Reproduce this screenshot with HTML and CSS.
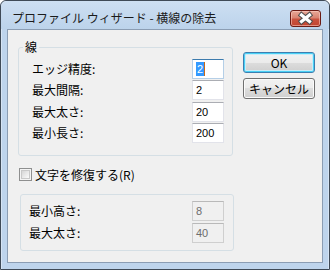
FILE: index.html
```html
<!DOCTYPE html>
<html lang="ja">
<head>
<meta charset="utf-8">
<link rel="stylesheet" href="styles.css">
</head>
<body>
<div class="window">
  <div class="titlebar">
    <span class="title">プロファイル ウィザード - 横線の除去</span>
    <span class="close">
      <svg width="31" height="17" viewBox="0 0 31 17">
        <path d="M11.5 5 L19.5 11.5 M19.5 5 L11.5 11.5" stroke="#4e4e4e" stroke-width="5.2" stroke-linecap="square" fill="none"/>
        <path d="M11.5 5 L19.5 11.5 M19.5 5 L11.5 11.5" stroke="#ffffff" stroke-width="3.2" stroke-linecap="square" fill="none"/>
      </svg>
    </span>
  </div>
  <div class="client">
    <div class="left">
      <div class="group g1">
        <span class="legend">線</span>
        <div class="row"><span class="lbl">エッジ精度:</span><span class="input focus"><span class="sel">2</span><span class="caret"></span></span></div>
        <div class="row"><span class="lbl">最大間隔:</span><span class="input">2</span></div>
        <div class="row"><span class="lbl">最大太さ:</span><span class="input">20</span></div>
        <div class="row"><span class="lbl">最小長さ:</span><span class="input">200</span></div>
      </div>
      <div class="check"><span class="box"><span class="inner"></span></span><span class="ctext">文字を修復する(R)</span></div>
      <div class="group g2">
        <div class="row"><span class="lbl">最小高さ:</span><span class="input disabled">8</span></div>
        <div class="row"><span class="lbl">最大太さ:</span><span class="input disabled">40</span></div>
      </div>
    </div>
    <div class="buttons">
      <span class="btn ok">OK</span>
      <span class="btn">キャンセル</span>
    </div>
  </div>
</div>
</body>
</html>
```
FILE: styles.css
```css
html, body {
  margin: 0;
  padding: 0;
  background: #ffffff;
}
body {
  font-family: "Noto Sans CJK JP", "Liberation Sans", sans-serif;
  font-size: 12px;
  color: #000;
}
.window {
  box-sizing: border-box;
  width: 330px;
  height: 270px;
  border: 1px solid #3f4a57;
  border-radius: 6px 6px 0 0;
  background: #bed4ec;
  padding: 0 6px 6px 6px;
  display: flex;
  flex-direction: column;
  box-shadow: inset 0 1px 0 #e4eef9, inset 1px 0 0 #d6e4f4, inset -1px 0 0 #d6e4f4;
}
.titlebar {
  height: 28px;
  display: flex;
  justify-content: space-between;
  align-items: flex-start;
  margin: 0 -6px;
  padding: 0 8px 0 11px;
  border-radius: 6px 6px 0 0;
  background: linear-gradient(#cddff2, #bcd3eb);
}
.title {
  margin-top: 9px;
  line-height: 16px;
  font-size: 12px;
  color: #1b1b1b;
  white-space: nowrap;
}
.close {
  margin-top: 9px;
  width: 31px;
  height: 17px;
  box-sizing: border-box;
  border: 1px solid #6b1b14;
  border-radius: 3px;
  background: linear-gradient(#e8a898 0%, #d98472 45%, #c9523f 55%, #c2442f 100%);
  box-shadow: inset 0 0 0 1px rgba(255, 210, 200, 0.55);
  display: flex;
  align-items: center;
  justify-content: center;
}
.close svg {
  display: block;
  margin: -1px;
}
.client {
  flex: 1;
  border: 1px solid #8b9db3;
  background: #f0f0f0;
  display: flex;
  align-items: flex-start;
}
.left {
  width: 216px;
  padding-left: 10px;
  display: flex;
  flex-direction: column;
  align-items: flex-start;
}
.group {
  position: relative;
  box-sizing: border-box;
  border: 1px solid #d5dfe5;
  border-radius: 3px;
  display: flex;
  flex-direction: column;
}
.g1 {
  margin-top: 17px;
  width: 215px;
  padding: 11px 8px 12px 13px;
  gap: 1.4px;
}
.g2 {
  margin-top: 13px;
  margin-left: 2px;
  width: 214px;
  padding: 6px 9px 7px 8px;
  gap: 2px;
}
.legend {
  position: absolute;
  top: -9px;
  left: 4px;
  padding: 0 2px;
  background: #f0f0f0;
  line-height: 16px;
}
.row {
  display: flex;
  align-items: center;
  height: 20px;
}
.lbl {
  flex: 1;
  line-height: 20px;
  white-space: nowrap;
}
.input {
  box-sizing: border-box;
  width: 32px;
  height: 20px;
  background: #ffffff;
  border: 1px solid #e2e3ea;
  border-top-color: #abadb3;
  padding-left: 3px;
  font-family: "Liberation Sans", sans-serif;
  font-size: 11px;
  line-height: 18px;
  display: flex;
  align-items: center;
}
.input.focus {
  border-color: #b5cfe7;
  border-top-color: #3d7bad;
}
.sel {
  background: #3399ff;
  color: #ffffff;
  line-height: 14px;
  padding: 0 1px;
}
.caret {
  width: 1px;
  height: 14px;
  background: #c86a1a;
}
.input.disabled {
  background: #f0f0f0;
  border-color: #cfcfcf;
  border-top-color: #b9b9b9;
  color: #6d6d6d;
}
.check {
  margin-top: 12px;
  margin-left: 1px;
  display: flex;
  align-items: center;
  height: 13px;
}
.box {
  box-sizing: border-box;
  width: 13px;
  height: 13px;
  border: 1px solid #8e8f8f;
  background: #f4f4f4;
  display: flex;
  align-items: center;
  justify-content: center;
}
.inner {
  box-sizing: border-box;
  width: 9px;
  height: 9px;
  border: 1px solid #c9c9c9;
  background: linear-gradient(135deg, #d6d6d6, #fbfbfb);
}
.ctext {
  margin-left: 3px;
  line-height: 16px;
  white-space: nowrap;
}
.buttons {
  margin-left: 9px;
  margin-top: 22px;
  display: flex;
  flex-direction: column;
  gap: 5px;
}
.btn {
  box-sizing: border-box;
  width: 72px;
  height: 21px;
  border: 1px solid #707070;
  border-radius: 3px;
  background: linear-gradient(#f2f2f2 0%, #ebebeb 50%, #dddddd 50%, #cfcfcf 100%);
  box-shadow: inset 0 0 0 1px #fbfbfb;
  display: flex;
  align-items: center;
  justify-content: center;
  line-height: 16px;
  white-space: nowrap;
}
.btn.ok {
  border-color: #3c7fb1;
  box-shadow: inset 0 0 0 1px #48d0f5, inset 0 0 0 2px #c8ecf9;
}
```
